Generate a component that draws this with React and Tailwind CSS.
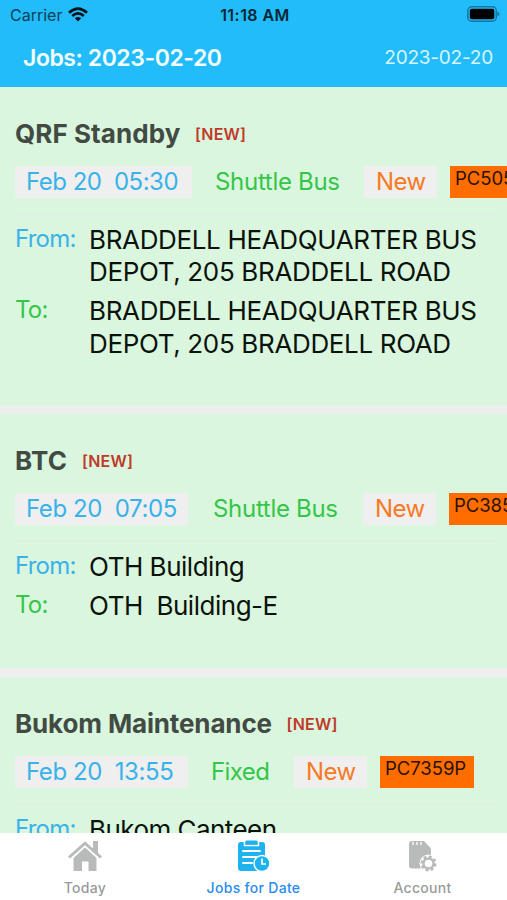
const jobs = [
  {
    name: "QRF Standby",
    nameTracking: "tracking-[0.08px]",
    height: "h-[318px]",
    head: "h-[78.5px]",
    rule: "mt-[15px]",
    time: "Feb 20\u00a0 05:30",
    timeTracking: "tracking-[-0.5px]",
    timeWidth: "w-[177px]",
    type: "Shuttle Bus",
    typeBox: "ml-[23px] w-[149px]",
    plate: "PC505",
    placeTracking: "tracking-[-0.35px]",
    from: ["BRADDELL HEADQUARTER BUS", "DEPOT, 205 BRADDELL ROAD"],
    to: ["BRADDELL HEADQUARTER BUS", "DEPOT, 205 BRADDELL ROAD"],
  },
  {
    name: "BTC",
    nameTracking: "tracking-[0.3px]",
    height: "h-[254px]",
    head: "h-[79px]",
    rule: "mt-[15px]",
    time: "Feb 20\u00a0 07:05",
    timeTracking: "tracking-[-0.4px]",
    timeWidth: "w-[173px]",
    type: "Shuttle Bus",
    typeBox: "ml-[25px] w-[150px]",
    plate: "PC385",
    placeTracking: "tracking-[-0.48px]",
    from: ["OTH Building"],
    to: ["OTH \u00a0Building-E"],
  },
  {
    name: "Bukom Maintenance",
    nameTracking: "tracking-[-0.14px]",
    height: "h-[318px]",
    head: "h-[79px]",
    rule: "mt-[15px]",
    time: "Feb 20\u00a0 13:55",
    timeTracking: "tracking-[-0.4px]",
    timeWidth: "w-[173px]",
    type: "Fixed",
    typeBox: "ml-[23px] w-[83px] tracking-[-0.6px]",
    plate: "PC7359P",
    placeTracking: "tracking-[-0.55px]",
    from: ["Bukom Canteen"],
    to: ["Bukom Jetty"],
  },
];

function Place({ label, color, lines, tracking }) {
  return (
    <div className="mb-[6.5px] flex">
      <div className={`w-[74px] shrink-0 text-[24px] leading-[29px] tracking-[-0.75px] ${color}`}>{label}</div>
      <div className={`text-[26px] leading-[32.5px] text-[#0b120c] ${tracking}`}>
        {lines.map((l) => (
          <div key={l} className="whitespace-nowrap">{l}</div>
        ))}
      </div>
    </div>
  );
}

function Job({ job }) {
  return (
    <section className={`shrink-0 overflow-hidden bg-[#daf6de] pl-[15px] ${job.height}`}>
      <div className={`flex items-center pt-[15px] ${job.head}`}>
        <h2 className={`text-[26px] leading-8 font-bold whitespace-nowrap text-[#424b43] ${job.nameTracking}`}>{job.name}</h2>
        <span className="ml-[14.5px] text-[16px] leading-5 font-semibold tracking-[0.2px] text-[#bf3a29]">[NEW]</span>
      </div>
      <div className="flex h-8 text-[24px] leading-[31px] tracking-[-0.3px] whitespace-nowrap">
        <div className={`shrink-0 bg-[#efefef] pl-[11px] text-[#38b3ea] ${job.timeWidth} ${job.timeTracking}`}>{job.time}</div>
        <div className={`shrink-0 text-[#34c648] ${job.typeBox}`}>{job.type}</div>
        <div className="w-[73px] shrink-0 bg-[#efefef] pl-[12px] tracking-[-0.6px] text-[#f67a24]">New</div>
        <div className="ml-[13px] h-8 shrink-0 bg-[#ff6d00] pr-[8px] pl-[5px] text-[18.5px] leading-[24px] tracking-[-0.05px] text-[#291300]">
          {job.plate}
        </div>
      </div>
      <div className={`mr-[11px] mb-[9px] h-[2px] bg-[#dff0e2] ${job.rule}`} />
      <Place label="From:" color="text-[#38b3ea]" lines={job.from} tracking={job.placeTracking} />
      <Place label="To:" color="text-[#34c648]" lines={job.to} tracking={job.placeTracking} />
    </section>
  );
}

function HomeIcon() {
  return (
    <svg viewBox="0 0 36 32" className="h-8 w-9" fill="#b9bbbb">
      <path d="M2 17.500 18 3.200l16 14.300" fill="none" stroke="#b9bbbb" strokeWidth="3" />
      <path d="M26 1h5v13l-5-4.500zM6.500 18 18 7.500 29.500 18v13H21.500v-9.500h-6.500V31H6.500z" />
    </svg>
  );
}

function JobsIcon() {
  return (
    <svg viewBox="0 0 34 32" className="h-8 w-[34px]">
      <rect x="1" y="2" width="27" height="29" rx="3" fill="#1eb2ee" />
      <path d="M7.500 1v4.500h14V1" fill="none" stroke="#fff" strokeWidth="1.500" />
      <rect x="8.500" y="0.500" width="12" height="4" rx="1" fill="#1eb2ee" />
      <path d="M6 11h17M6 17h13M6 23h9" stroke="#fff" strokeWidth="2" strokeLinecap="round" />
      <circle cx="25" cy="23.500" r="8" fill="#1eb2ee" stroke="#fff" strokeWidth="1.500" />
      <path d="M25 18.500v5.500h4" fill="none" stroke="#fff" strokeWidth="1.700" />
    </svg>
  );
}

function AccountIcon() {
  return (
    <svg viewBox="0 0 30 32" className="h-8 w-[30px]">
      <path d="M4 1h12l7 7.500v20H4q-3 0-3-3V4q0-3 3-3z" fill="#b9bbbb" />
      <path d="M5 2v3M9 2v3M13 2v3" stroke="#fff" strokeWidth="1.300" />
      <circle cx="20.500" cy="23.500" r="9" fill="#fff" />
      <circle cx="20.500" cy="23.500" r="6.800" fill="none" stroke="#b9bbbb" strokeWidth="2.500" strokeDasharray="3.000 2.340" />
      <circle cx="20.500" cy="23.500" r="5" fill="none" stroke="#b9bbbb" strokeWidth="2.400" />
    </svg>
  );
}

export default function App() {
  return (
    <div className="flex h-[900px] w-[507px] flex-col overflow-hidden bg-white font-['Inter','Liberation_Sans',sans-serif]">
      <header className="h-[87px] shrink-0 bg-[#23bcfa]">
        <div className="grid h-[30px] grid-cols-3 items-center pr-[7px] pl-[10px] text-[16px] text-[#062634]">
          <div className="flex items-center gap-[6px]">
            <span className="text-[#0b4058]">Carrier</span>
            <svg viewBox="0 0 20 15" className="-mt-px h-[15px] w-5" fill="none" stroke="#04141c" strokeWidth="2.700">
              <path d="M1 5.700Q10-2.500 19 5.700M4.200 9Q10 3.800 15.800 9" />
              <path d="M10 14.500 6.800 11.200q3.200-2.600 6.400 0z" fill="#04141c" stroke="none" />
            </svg>
          </div>
          <div className="text-center font-semibold tracking-[0.45px] whitespace-nowrap">11:18 AM</div>
          <svg viewBox="0 0 33 16" className="-mt-[2px] h-4 w-[33px] justify-self-end">
            <rect x="0.800" y="0.800" width="28.500" height="14.400" rx="4" fill="none" stroke="#15779e" strokeWidth="1.500" />
            <rect x="2.800" y="2.800" width="24.500" height="10.400" rx="2" />
            <path d="M30.500 5.500q2 .7 2 2.500t-2 2.500z" fill="#15779e" />
          </svg>
        </div>
        <div className="flex h-14 items-center justify-between pr-[14px] pl-[23px] text-[#f2fcff]">
          <h1 className="text-[23px] font-semibold tracking-[-0.45px] whitespace-nowrap">Jobs: 2023-02-20</h1>
          <span className="text-[19px] tracking-[-0.22px] whitespace-nowrap text-[#d8f4ff]">2023-02-20</span>
        </div>
      </header>
      <main className="flex min-h-0 flex-1 flex-col gap-[9px] overflow-hidden bg-[#efeeef]">
        {jobs.map((j) => (
          <Job key={j.name} job={j} />
        ))}
      </main>
      <nav className="grid h-[67px] shrink-0 grid-cols-3 bg-white pt-[7px] text-[14px] leading-[20px] font-medium tracking-[0.3px] text-[#9a9a9a]">
        <div className="flex flex-col items-center gap-[6px] pl-px">
          <HomeIcon />
          <span>Today</span>
        </div>
        <div className="flex flex-col items-center gap-[6px] text-[#2a8bf0]">
          <JobsIcon />
          <span>Jobs for Date</span>
        </div>
        <div className="flex flex-col items-center gap-[6px]">
          <AccountIcon />
          <span>Account</span>
        </div>
      </nav>
    </div>
  );
}
